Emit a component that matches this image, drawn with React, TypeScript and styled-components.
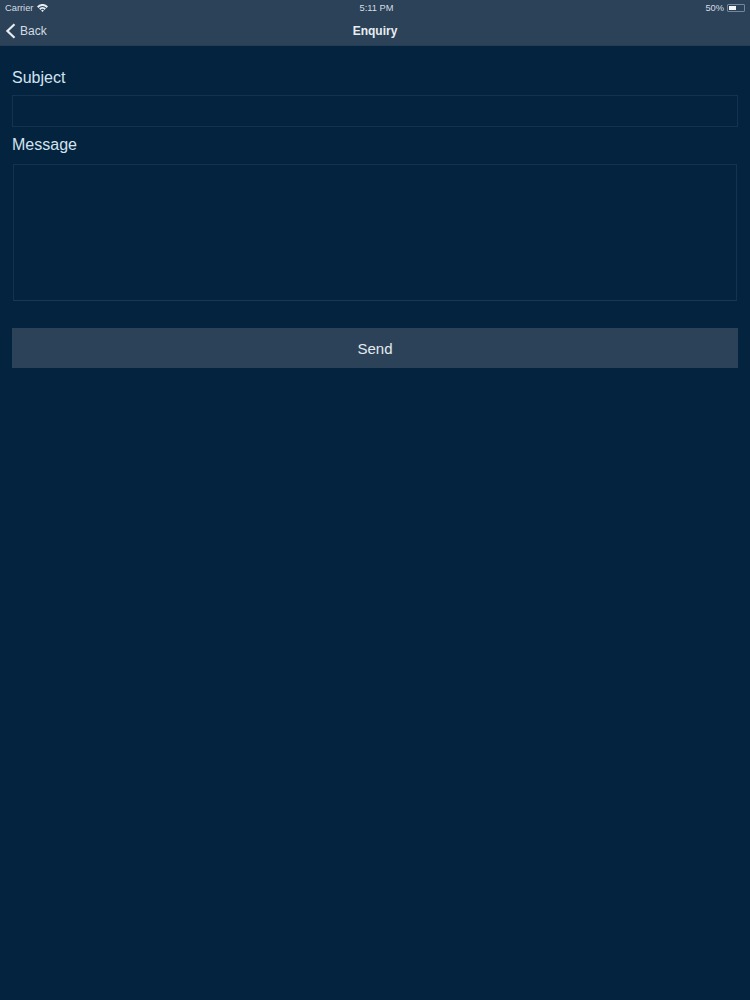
import styled, { createGlobalStyle } from "styled-components";

const GlobalStyle = createGlobalStyle`
  html, body {
    margin: 0;
    padding: 0;
    background: #03233f;
  }
  * {
    box-sizing: border-box;
  }
`;

export default function App() {
  return (
    <Page>
      <GlobalStyle />
      <Header>
        <StatusBar>
          <StatusLeft>
            Carrier
            <svg width="11" height="8" viewBox="0 0 11 8">
              <path d="M0 2.4 A7.4 7.4 0 0 1 11 2.4 L9.6 3.9 A5.5 5.5 0 0 0 1.4 3.9 Z" fill="#e6ecf1" />
              <path d="M2.1 4.6 A4.5 4.5 0 0 1 8.9 4.6 L7.6 5.9 A2.8 2.8 0 0 0 3.4 5.9 Z" fill="#e6ecf1" />
              <path d="M4.1 6.6 A1.8 1.8 0 0 1 6.9 6.6 L5.5 8 Z" fill="#e6ecf1" />
            </svg>
          </StatusLeft>
          <Clock>5:11 PM</Clock>
          <StatusRight>
            50%
            <Battery>
              <BatteryFill />
            </Battery>
          </StatusRight>
        </StatusBar>
        <NavBar>
          <BackLink>
            <svg width="11" height="16" viewBox="0 0 11 16">
              <path d="M9.5 1.2 L2.4 8 L9.5 14.8" fill="none" stroke="#e8edf1" strokeWidth="2.2" />
            </svg>
            Back
          </BackLink>
          <Title>Enquiry</Title>
        </NavBar>
      </Header>
      <Form>
        <Label>Subject</Label>
        <SubjectBox />
        <MessageLabel>Message</MessageLabel>
        <MessageBox />
        <SendButton>Send</SendButton>
      </Form>
    </Page>
  );
}

const Page = styled.div`
  width: 750px;
  height: 1000px;
  overflow: hidden;
  background: #03233f;
  font-family: "Liberation Sans", Arial, sans-serif;
`;

const Header = styled.header`
  height: 46px;
  background: #2b4259;
  border-bottom: 1px solid #263c53;
`;

const StatusBar = styled.div`
  height: 15px;
  padding: 0 5px;
  display: grid;
  grid-template-columns: 1fr auto 1fr;
  align-items: center;
  font-size: 9.3px;
  color: #d5dde4;
`;

const StatusLeft = styled.div`
  display: flex;
  align-items: center;
  gap: 4px;
`;

const Clock = styled.div`
  padding-left: 3px;
`;

const StatusRight = styled.div`
  display: flex;
  align-items: center;
  justify-content: flex-end;
  gap: 3px;
`;

const Battery = styled.div`
  width: 18px;
  height: 8px;
  padding: 1px;
  border: 1px solid #75869a;
  border-radius: 1px;
`;

const BatteryFill = styled.div`
  width: 50%;
  height: 100%;
  background: #f2f5f7;
`;

const NavBar = styled.div`
  position: relative;
  height: 30px;
  padding-top: 2px;
  display: flex;
  align-items: center;
  justify-content: center;
`;

const BackLink = styled.div`
  position: absolute;
  left: 5px;
  top: 8px;
  display: flex;
  align-items: center;
  gap: 4px;
  font-size: 12px;
  color: #d3dce3;
`;

const Title = styled.div`
  font-size: 12px;
  font-weight: 700;
  color: #e8edf1;
`;

const Form = styled.main`
  padding: 23px 12px 0;
  display: flex;
  flex-direction: column;
`;

const Label = styled.label`
  height: 18px;
  line-height: 18px;
  font-size: 16px;
  color: #d3e3ef;
`;

const MessageLabel = styled(Label)`
  margin-top: 9px;
`;

const SubjectBox = styled.div`
  height: 32px;
  margin-top: 8px;
  border: 1px solid #143352;
`;

const MessageBox = styled.div`
  height: 137px;
  margin: 10px 1px 0;
  border: 1px solid #143352;
  border-bottom-color: #1a3853;
`;

const SendButton = styled.button`
  height: 40px;
  margin-top: 27px;
  border: none;
  background: #2b4259;
  color: #e4eaef;
  font-family: inherit;
  font-size: 15px;
`;
